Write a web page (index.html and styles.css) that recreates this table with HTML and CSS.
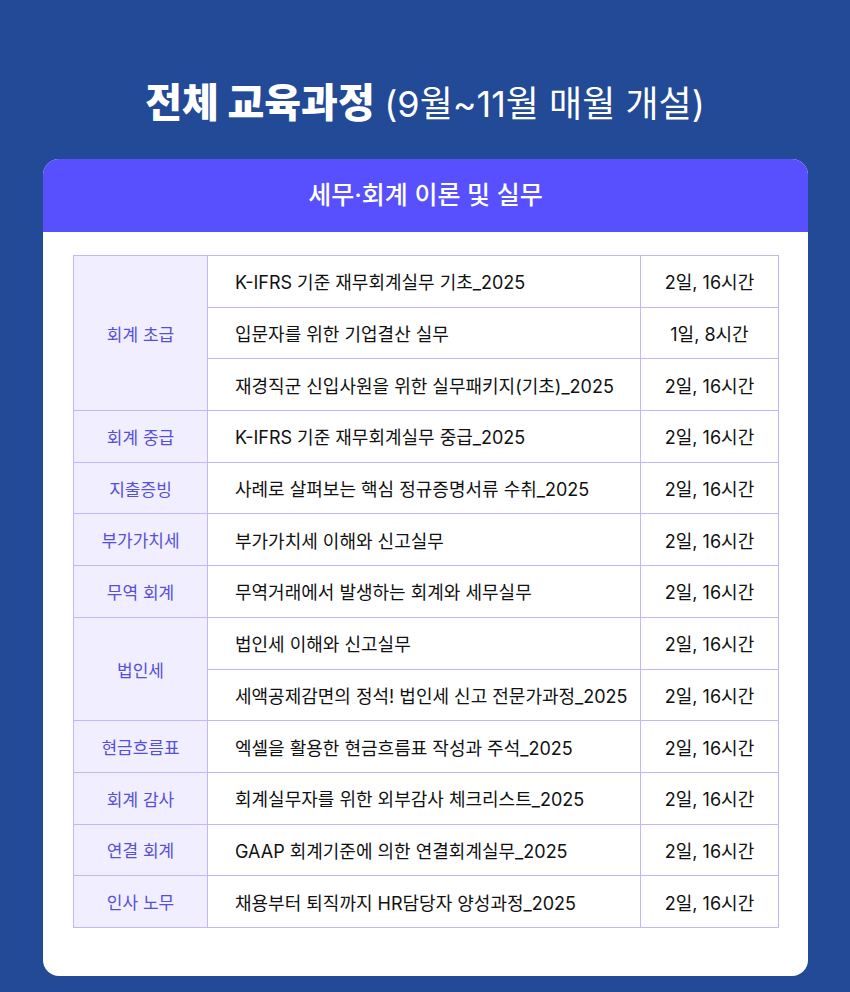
FILE: index.html
```html
<!DOCTYPE html>
<html lang="ko">
<head>
<meta charset="utf-8">
<link rel="stylesheet" href="styles.css">
</head>
<body>
<div class="page">
  <h1 class="title"><strong>전체 교육과정</strong> <span class="sub">(9월~11월 매월 개설)</span></h1>
  <div class="card">
    <div class="card-head">세무·회계 이론 및 실무</div>
    <div class="card-body">
      <table class="courses">
        <colgroup><col class="c1"><col class="c2"><col class="c3"></colgroup>
        <tbody>
          <tr><td class="cat" rowspan="3">회계 초급</td><td class="name">K-IFRS 기준 재무회계실무 기초_2025</td><td class="dur">2일, 16시간</td></tr>
          <tr><td class="name">입문자를 위한 기업결산 실무</td><td class="dur">1일, 8시간</td></tr>
          <tr><td class="name">재경직군 신입사원을 위한 실무패키지(기초)_2025</td><td class="dur">2일, 16시간</td></tr>
          <tr><td class="cat">회계 중급</td><td class="name">K-IFRS 기준 재무회계실무 중급_2025</td><td class="dur">2일, 16시간</td></tr>
          <tr><td class="cat">지출증빙</td><td class="name">사례로 살펴보는 핵심 정규증명서류 수취_2025</td><td class="dur">2일, 16시간</td></tr>
          <tr><td class="cat">부가가치세</td><td class="name">부가가치세 이해와 신고실무</td><td class="dur">2일, 16시간</td></tr>
          <tr><td class="cat">무역 회계</td><td class="name">무역거래에서 발생하는 회계와 세무실무</td><td class="dur">2일, 16시간</td></tr>
          <tr><td class="cat" rowspan="2">법인세</td><td class="name">법인세 이해와 신고실무</td><td class="dur">2일, 16시간</td></tr>
          <tr><td class="name">세액공제감면의 정석! 법인세 신고 전문가과정_2025</td><td class="dur">2일, 16시간</td></tr>
          <tr><td class="cat">현금흐름표</td><td class="name">엑셀을 활용한 현금흐름표 작성과 주석_2025</td><td class="dur">2일, 16시간</td></tr>
          <tr><td class="cat">회계 감사</td><td class="name">회계실무자를 위한 외부감사 체크리스트_2025</td><td class="dur">2일, 16시간</td></tr>
          <tr><td class="cat">연결 회계</td><td class="name">GAAP 회계기준에 의한 연결회계실무_2025</td><td class="dur">2일, 16시간</td></tr>
          <tr><td class="cat">인사 노무</td><td class="name">채용부터 퇴직까지 HR담당자 양성과정_2025</td><td class="dur">2일, 16시간</td></tr>
        </tbody>
      </table>
    </div>
  </div>
</div>
</body>
</html>
```

FILE: styles.css
```css
* { box-sizing: border-box; }
html, body {
  margin: 0;
  padding: 0;
}
body {
  background: #224a97;
  font-family: Inter, "Noto Sans CJK KR", "Noto Sans", sans-serif;
  color: #111;
}
.page {
  width: 850px;
  height: 992px;
  padding-top: 78px;
}
.title {
  margin: 0;
  height: 50px;
  line-height: 50px;
  text-align: center;
  color: #fff;
  font-size: 40px;
  white-space: nowrap;
}
.title strong {
  font-weight: 800;
}
.title .sub {
  font-weight: 400;
  font-size: 36px;
}
.card {
  margin: 31px 0 0 43px;
  width: 765px;
  height: 817px;
  background: #fff;
  border-radius: 16px;
  overflow: hidden;
}
.card-head {
  height: 73px;
  background: #5850ff;
  color: #fff;
  font-size: 25px;
  font-weight: 500;
  text-align: center;
  line-height: 72px;
}
.card-body {
  padding: 23px 30px 0 30px;
}
.courses {
  width: 705px;
  border-collapse: collapse;
  table-layout: fixed;
  font-size: 18px;
}
.c1 { width: 134px; }
.c2 { width: 433px; }
.c3 { width: 138px; }
.courses td {
  border: 1px solid #bdb8ff;
  height: 51.7px;
  padding: 0;
  vertical-align: middle;
  white-space: nowrap;
}
.cat {
  background: #f0eeff;
  color: #5650d8;
  text-align: center;
  font-size: 17px;
}
.name {
  padding-left: 27px !important;
}
.dur {
  text-align: center;
}
```
